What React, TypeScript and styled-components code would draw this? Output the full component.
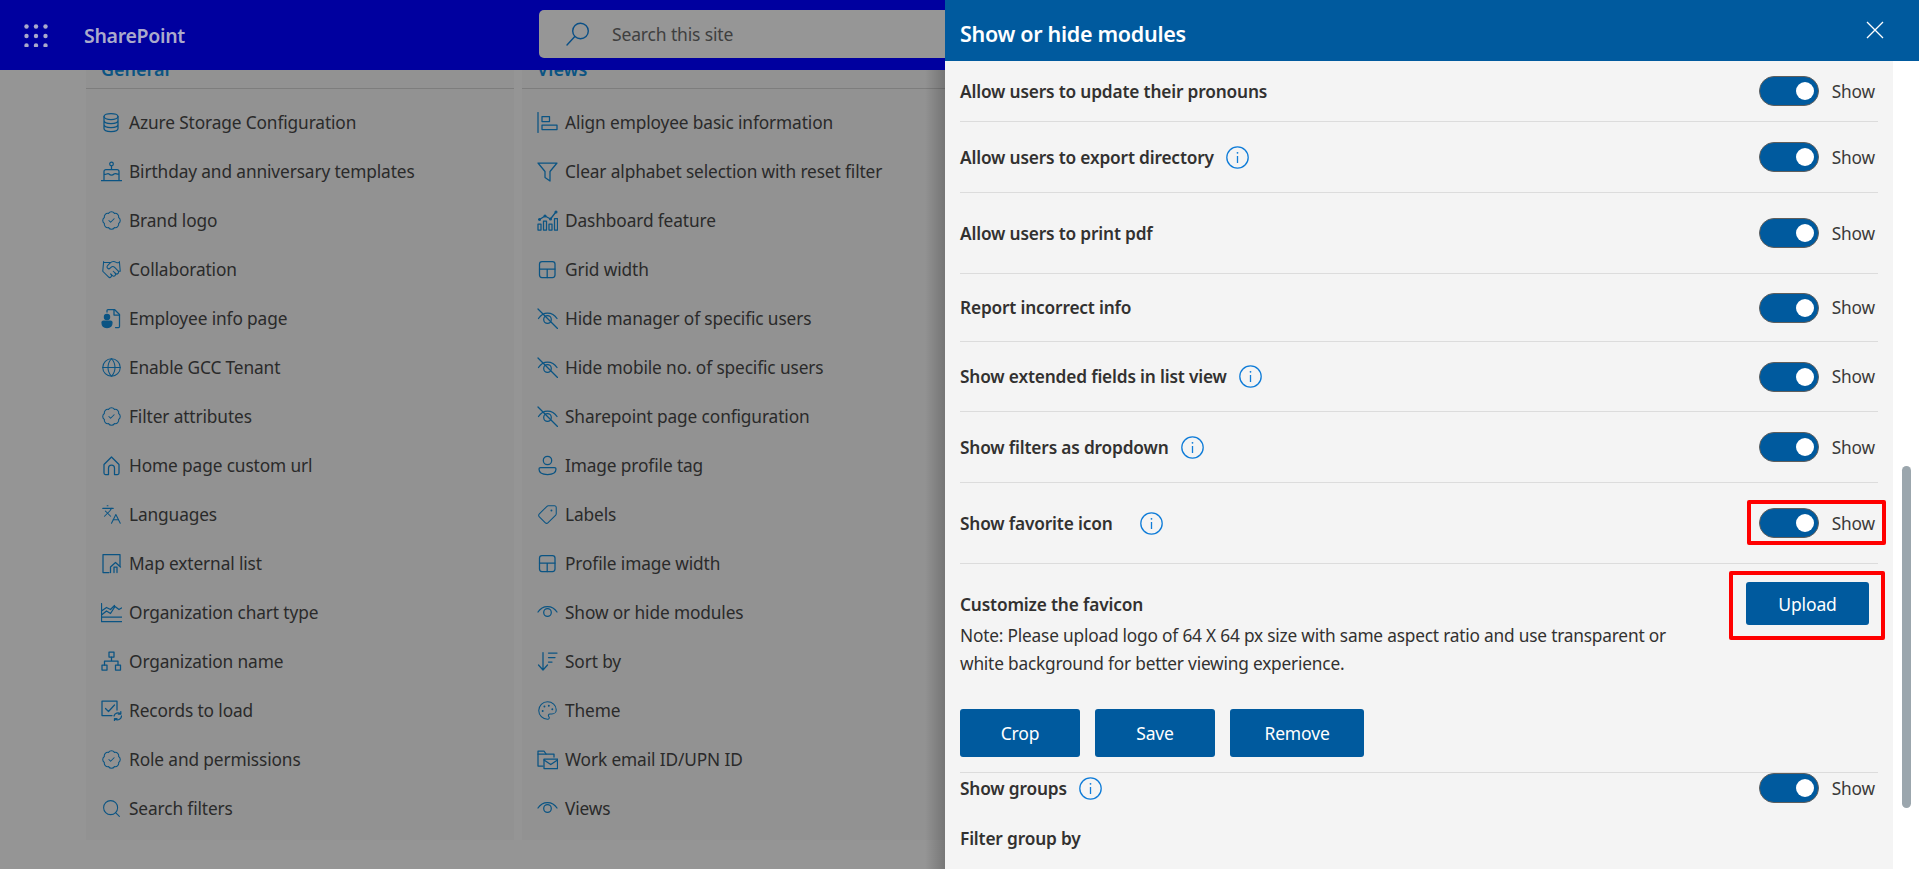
import React from "react";
import styled, { createGlobalStyle } from "styled-components";
import { BadgeCheck, Handshake, Globe, Search, Palette, Tag, Languages } from "lucide-react";

const Global = createGlobalStyle`
  html, body { margin: 0; padding: 0; height: 100%; overflow: hidden; background: #959595; }
  * { box-sizing: border-box; }
  body { font-family: "Noto Sans", "Open Sans", Arial, sans-serif; }
`;

const Page = styled.div`
  position: relative;
  width: 100vw;
  height: 100vh;
  overflow: hidden;
  display: flex;
  flex-direction: column;
`;
const TopBar = styled.header`
  height: 70px;
  flex: none;
  background: #00009f;
  display: flex;
  align-items: center;
`;
const Waffle = styled.svg`
  width: 24px;
  height: 23px;
  margin-left: 24px;
  flex: none;
`;
const Brand = styled.div`
  margin-left: 36px;
  width: 455px;
  flex: none;
  color: #aaaacb;
  font-size: 19.5px;
  font-weight: 600;
  letter-spacing: -0.3px;
`;
const SearchBox = styled.div`
  width: 460px;
  height: 48px;
  flex: none;
  background: #969696;
  border-radius: 5px;
  display: flex;
  align-items: center;
  color: #3f3f3f;
  font-size: 17.5px;
  letter-spacing: -0.15px;
  padding-left: 26px;
  gap: 21px;
  margin-top: -2px;
`;
const Main = styled.main`
  position: relative;
  flex: 1;
  min-height: 0;
  overflow: hidden;
  padding-left: 86px;
  display: flex;
  align-items: flex-start;
  gap: 8px;
`;
const Shade = styled.div`
  position: absolute;
  top: 0;
  bottom: 0;
  left: 925px;
  width: 20px;
  background: linear-gradient(to right, rgba(0, 0, 0, 0), rgba(0, 0, 0, 0.2));
`;
const Card = styled.section`
  width: 428px;
  height: 770px;
  flex: none;
  background: #929292;
`;
const CardTitle = styled.h2`
  margin: -16px 0 0;
  height: 35px;
  padding-left: 15px;
  border-bottom: 1px solid #7d7d7d;
  color: #0b5483;
  font-size: 18px;
  line-height: 30px;
  font-weight: 600;
`;
const List = styled.ul`
  list-style: none;
  margin: 0;
  padding: 9px 0 0 15px;
`;
const Item = styled.li`
  height: 49px;
  display: flex;
  align-items: center;
  color: #2a2a2a;
  font-size: 17.3px;
  letter-spacing: -0.12px;
`;
const IconBox = styled.span`
  width: 28px;
  flex: none;
  display: flex;
  align-items: center;
  color: #0b5483;
  svg { display: block; width: 21px; height: 21px; }
`;

const Panel = styled.aside`
  position: absolute;
  top: 0;
  right: 0;
  bottom: 0;
  width: 974px;
  display: flex;
  flex-direction: column;
  background: #fff;
`;
const PanelHead = styled.div`
  height: 61px;
  flex: none;
  background: #005a9e;
  color: #fff;
  display: flex;
  align-items: center;
  justify-content: space-between;
  padding: 0 35px 0 15px;
`;
const PanelTitle = styled.h1`
  margin: 0 0 -5px;
  font-size: 21.5px;
  font-weight: 600;
  letter-spacing: -0.3px;
`;
const Close = styled.svg`
  width: 18px;
  height: 18px;
  margin-bottom: 2px;
`;
const PanelBody = styled.div`
  flex: 1;
  min-height: 0;
  display: flex;
`;
const Content = styled.div`
  flex: 1;
  min-width: 0;
  overflow: hidden;
  background: #f4f4f4;
  padding: 0 15px;
`;
const Rail = styled.div`
  width: 26px;
  flex: none;
  background: #fff;
  padding: 405px 8px 0 9px;
`;
const Thumb = styled.div`
  height: 342px;
  background: #9ba6ad;
  border-radius: 5px;
`;
const Row = styled.div<{ $h: number; $top?: number; $plain?: boolean }>`
  height: ${(p) => p.$h}px;
  margin-top: ${(p) => p.$top ?? 0}px;
  display: flex;
  align-items: center;
  justify-content: space-between;
  border-bottom: ${(p) => (p.$plain ? "none" : "1px solid #dcdcdc")};
`;
const Label = styled.div<{ $gap?: number }>`
  display: flex;
  align-items: center;
  gap: ${(p) => p.$gap ?? 12}px;
  color: #323130;
  font-size: 17.3px;
  font-weight: 600;
  letter-spacing: -0.17px;
`;
const Info = styled.svg`
  width: 23px;
  height: 23px;
  flex: none;
  color: #0f7cd8;
`;
const ToggleGroup = styled.div`
  position: relative;
  display: flex;
  align-items: center;
  gap: 13px;
  margin-right: 3px;
  color: #3b3a39;
  font-size: 17.3px;
  letter-spacing: -0.15px;
`;
const Track = styled.div`
  width: 60px;
  height: 30px;
  background: #005a9e;
  border: 1px solid #5f5e5c;
  border-radius: 15px;
  display: flex;
  align-items: center;
  justify-content: flex-end;
  padding-right: 4px;
`;
const Knob = styled.div`
  width: 18px;
  height: 18px;
  border-radius: 50%;
  background: #fff;
`;
const RedFrame = styled.div<{ $t: number; $r: number; $b: number; $l: number }>`
  position: absolute;
  top: ${(p) => p.$t}px;
  right: ${(p) => p.$r}px;
  bottom: ${(p) => p.$b}px;
  left: ${(p) => p.$l}px;
  border: 4px solid #f00;
  border-radius: 2px;
  pointer-events: none;
`;
const Customize = styled.div`
  height: 209px;
  border-bottom: 1px solid #dcdcdc;
  padding-top: 18px;
  display: flex;
  flex-direction: column;
`;
const CustomizeTop = styled.div`
  display: flex;
  justify-content: space-between;
  align-items: flex-start;
  min-height: 110px;
`;
const CustomizeTitle = styled.h3`
  margin: 11px 0 5px;
  color: #323130;
  font-size: 17.3px;
  line-height: 24px;
  font-weight: 600;
  letter-spacing: -0.17px;
`;
const Note = styled.p`
  margin: 0;
  width: 730px;
  color: #323130;
  font-size: 17.3px;
  line-height: 28px;
  letter-spacing: -0.2px;
`;
const UploadWrap = styled.div`
  position: relative;
  margin-right: 9px;
`;
const Btn = styled.button<{ $w: number; $h?: number }>`
  width: ${(p) => p.$w}px;
  height: ${(p) => p.$h ?? 48}px;
  background: #005a9e;
  color: #fff;
  border: 0;
  border-radius: 3px;
  font-family: inherit;
  font-size: 17.5px;
  letter-spacing: -0.15px;
  padding: 0;
  display: block;
`;
const Actions = styled.div`
  display: flex;
  gap: 15px;
  margin-top: 17px;
`;
const Heading = styled.div`
  margin-top: 20px;
  color: #323130;
  font-size: 17.3px;
  line-height: 32px;
  font-weight: 600;
  letter-spacing: -0.17px;
`;

const S = { fill: "none", stroke: "currentColor", strokeWidth: 1.25, strokeLinecap: "round" as const, strokeLinejoin: "round" as const };
const Svg = ({ children }: { children: React.ReactNode }) => <svg viewBox="0 0 21 21" {...S}>{children}</svg>;

const Lu = (C: any, extra?: any) => <C strokeWidth={1.2} {...extra} />;

const grid = <Svg><rect x="2.5" y="2.5" width="15.5" height="16" rx="2.5" /><path d="M2.5 10h15.5M10.2 10v8.5" /></Svg>;
const eyeOff = <Svg><path d="M1 1l19.5 19.5" /><path d="M1.5 10.5C4 6.5 7 5 10.5 5S17.5 6.5 20 10.5M3.5 12.5" /><circle cx="10.5" cy="11.5" r="3.8" /></Svg>;
const eye = <Svg><path d="M1 10C3.5 6 7 4.5 10.5 4.5S17.5 6 20 10" /><circle cx="10.5" cy="10.5" r="3.8" /></Svg>;

const icons: Record<string, React.ReactNode> = {
  db: <Svg><ellipse cx="10" cy="4.5" rx="7" ry="3" /><path d="M3 4.5v12c0 1.7 3 3 7 3s7-1.3 7-3v-12M3 8.5c0 1.7 3 3 7 3s7-1.3 7-3M3 12.5c0 1.7 3 3 7 3s7-1.3 7-3" /></Svg>,
  cake: <Svg><circle cx="10.5" cy="3" r="1.8" /><path d="M10.5 5v3M3 19V10.5a2 2 0 012-2h11a2 2 0 012 2V19M3 13c2 1.5 3.5-1.5 5 0s3.500 1.500 5 0 3.500 1 5 0M.5 19.500h20" /></Svg>,
  badge: Lu(BadgeCheck),
  hands: Lu(Handshake),
  emp: <Svg><path d="M6 4V2.500a1 1 0 011-1h6.500L18.500 6.500v12a1 1 0 01-1 1h-3" /><path d="M13 1.500V7h5.500" /><circle cx="6" cy="9" r="2.600" fill="currentColor" /><path d="M1 14.500a1.500 1.500 0 011.500-1.500h7a1.500 1.500 0 011.500 1.500c0 3-2 5-5 5s-5-2-5-5z" fill="currentColor" /></Svg>,
  globe: Lu(Globe),
  home: <Svg><path d="M3 9.500L10.500 2l7.500 7.500V18a1.500 1.500 0 01-1.500 1.500H13.500V13a3 3 0 00-6 0v6.500H4.500A1.500 1.500 0 013 18z" /></Svg>,
  lang: Lu(Languages),
  map: <Svg><path d="M8 19.500H2V1.500h17v11" /><path d="M9.500 19.500V14l5-4.500 5 4.500M13 19.500v-5.500h3v5.500" /></Svg>,
  area: <Svg><path d="M.5 1.500v18h20M.5 13l5-4 4 2.500 4.500-7 4 3 2.500-1.500M.5 15h20M.5 9L5.500 5.500l4 2 4-4" /></Svg>,
  org: <Svg><rect x="8" y="1" width="5" height="5" /><rect x="1" y="14" width="5" height="5" /><rect x="14.500" y="14" width="5" height="5" /><path d="M10.500 6v4M3.500 14v-4h13.500v4" /></Svg>,
  rec: <Svg><path d="M11 15.500H1V1h15v9" /><path d="M4.500 8.500l3 3 6-6.500" /><path d="M13 16a4 4 0 016.500-2M20.500 16a4 4 0 01-6.500 3M19.800 11.500v2.500h-2.500M13.500 21v-2.500H16" /></Svg>,
  search: Lu(Search),
  align: <Svg><path d="M1 .5v20M5 4.500h7.500v5H5zM5 13h15v4.500H5z" /></Svg>,
  filter: <Svg><path d="M1 2h19l-7 8.500v9.500l-5-3.500v-6z" /></Svg>,
  dash: <Svg><path d="M1 14h3v6H1zM6.500 11h3v9h-3zM12 14h3v6h-3zM17.500 8.500h3V20h-3z" /><path d="M2.500 9.500L8 6l5.500 3 5-6.500" /><circle cx="2.500" cy="9.500" r=".9" /><circle cx="8" cy="6" r=".9" /><circle cx="13.500" cy="9" r=".9" /><circle cx="19" cy="2" r=".9" /></Svg>,
  grid,
  eyeOff,
  eye,
  user: <Svg><circle cx="10.500" cy="5.500" r="4.200" /><path d="M2 14a1.500 1.500 0 011.500-1.500h14A1.500 1.500 0 0119 14c0 3.500-3.500 5.500-8.500 5.500S2 17.500 2 14z" /></Svg>,
  tag: Lu(Tag, { style: { transform: "scaleX(-1)" } }),
  sort: <Svg><path d="M6 1.500v17M1.500 14l4.500 5 4.500-5M11.500 2H20M11.500 6.500H18M11.500 11H15" /></Svg>,
  palette: Lu(Palette),
  mail: <Svg><path d="M6 17H1V2h6l2 3h8v3" /><path d="M1 5h8" /><rect x="7" y="10" width="13.500" height="9.500" /><path d="M7 11l6.750 4.500 6.750-4.500" /></Svg>,
};

const general: [string, string][] = [
  ["db", "Azure Storage Configuration"],
  ["cake", "Birthday and anniversary templates"],
  ["badge", "Brand logo"],
  ["hands", "Collaboration"],
  ["emp", "Employee info page"],
  ["globe", "Enable GCC Tenant"],
  ["badge", "Filter attributes"],
  ["home", "Home page custom url"],
  ["lang", "Languages"],
  ["map", "Map external list"],
  ["area", "Organization chart type"],
  ["org", "Organization name"],
  ["rec", "Records to load"],
  ["badge", "Role and permissions"],
  ["search", "Search filters"],
];
const views: [string, string][] = [
  ["align", "Align employee basic information"],
  ["filter", "Clear alphabet selection with reset filter"],
  ["dash", "Dashboard feature"],
  ["grid", "Grid width"],
  ["eyeOff", "Hide manager of specific users"],
  ["eyeOff", "Hide mobile no. of specific users"],
  ["eyeOff", "Sharepoint page configuration"],
  ["user", "Image profile tag"],
  ["tag", "Labels"],
  ["grid", "Profile image width"],
  ["eye", "Show or hide modules"],
  ["sort", "Sort by"],
  ["palette", "Theme"],
  ["mail", "Work email ID/UPN ID"],
  ["eye", "Views"],
];

const InfoIcon = () => (
  <Info viewBox="0 0 23 23" fill="none" stroke="currentColor" strokeWidth={1.3}>
    <circle cx="11.500" cy="11.500" r="10.700" />
    <path d="M11.500 10v7" />
    <circle cx="11.500" cy="6.800" r=".9" fill="currentColor" stroke="none" />
  </Info>
);

const Toggle = ({ framed }: { framed?: boolean }) => (
  <ToggleGroup>
    <Track><Knob /></Track>
    Show
    {framed && <RedFrame $t={-8} $r={-11} $b={-7} $l={-12} />}
  </ToggleGroup>
);

const rows: { text: string; h: number; info?: boolean; gap?: number; framed?: boolean }[] = [
  { text: "Allow users to update their pronouns", h: 61 },
  { text: "Allow users to export directory", h: 71, info: true },
  { text: "Allow users to print pdf", h: 81 },
  { text: "Report incorrect info", h: 68 },
  { text: "Show extended fields in list view", h: 70, info: true },
  { text: "Show filters as dropdown", h: 71, info: true },
  { text: "Show favorite icon", h: 81, info: true, gap: 27, framed: true },
];

const Col = ({ title, items }: { title: string; items: [string, string][] }) => (
  <Card>
    <CardTitle>{title}</CardTitle>
    <List>
      {items.map(([icon, text]) => (
        <Item key={text}>
          <IconBox>{icons[icon]}</IconBox>
          {text}
        </Item>
      ))}
    </List>
  </Card>
);

export default function App() {
  return (
    <Page>
      <Global />
      <TopBar>
        <Waffle viewBox="0 0 24 23" fill="#aaaacb">
          {[2.500, 12, 21.500].flatMap((y) =>
            [2.500, 12, 21.500].map((x) => <circle key={`${x}-${y}`} cx={x} cy={y} r="2.200" />)
          )}
        </Waffle>
        <Brand>SharePoint</Brand>
        <SearchBox>
          <svg width="26" height="26" viewBox="0 0 26 26" fill="none" stroke="#0a4f86" strokeWidth="1.400" strokeLinecap="round">
            <circle cx="15.500" cy="10" r="7.800" />
            <path d="M9.800 15.500L2 24" />
          </svg>
          Search this site
        </SearchBox>
      </TopBar>
      <Main>
        <Col title="General" items={general} />
        <Col title="Views" items={views} />
        <Shade />
      </Main>
      <Panel>
        <PanelHead>
          <PanelTitle>Show or hide modules</PanelTitle>
          <Close viewBox="0 0 18 18" fill="none" stroke="#fff" strokeWidth="1.300">
            <path d="M1 1l16 16M17 1L1 17" />
          </Close>
        </PanelHead>
        <PanelBody>
          <Content>
            {rows.map((r) => (
              <Row key={r.text} $h={r.h}>
                <Label $gap={r.gap}>
                  {r.text}
                  {r.info && <InfoIcon />}
                </Label>
                <Toggle framed={r.framed} />
              </Row>
            ))}
            <Customize>
              <CustomizeTop>
                <div>
                  <CustomizeTitle>Customize the favicon</CustomizeTitle>
                  <Note>
                    Note: Please upload logo of 64 X 64 px size with same aspect ratio and use transparent or white background for better viewing experience.
                  </Note>
                </div>
                <UploadWrap>
                  <Btn $w={123} $h={43}>Upload</Btn>
                  <RedFrame $t={-11} $r={-16} $b={-15} $l={-17} />
                </UploadWrap>
              </CustomizeTop>
              <Actions>
                <Btn $w={120}>Crop</Btn>
                <Btn $w={120}>Save</Btn>
                <Btn $w={134}>Remove</Btn>
              </Actions>
            </Customize>
            <Row $h={30} $plain>
              <Label>
                Show groups
                <InfoIcon />
              </Label>
              <Toggle />
            </Row>
            <Heading>Filter group by</Heading>
          </Content>
          <Rail><Thumb /></Rail>
        </PanelBody>
      </Panel>
    </Page>
  );
}
